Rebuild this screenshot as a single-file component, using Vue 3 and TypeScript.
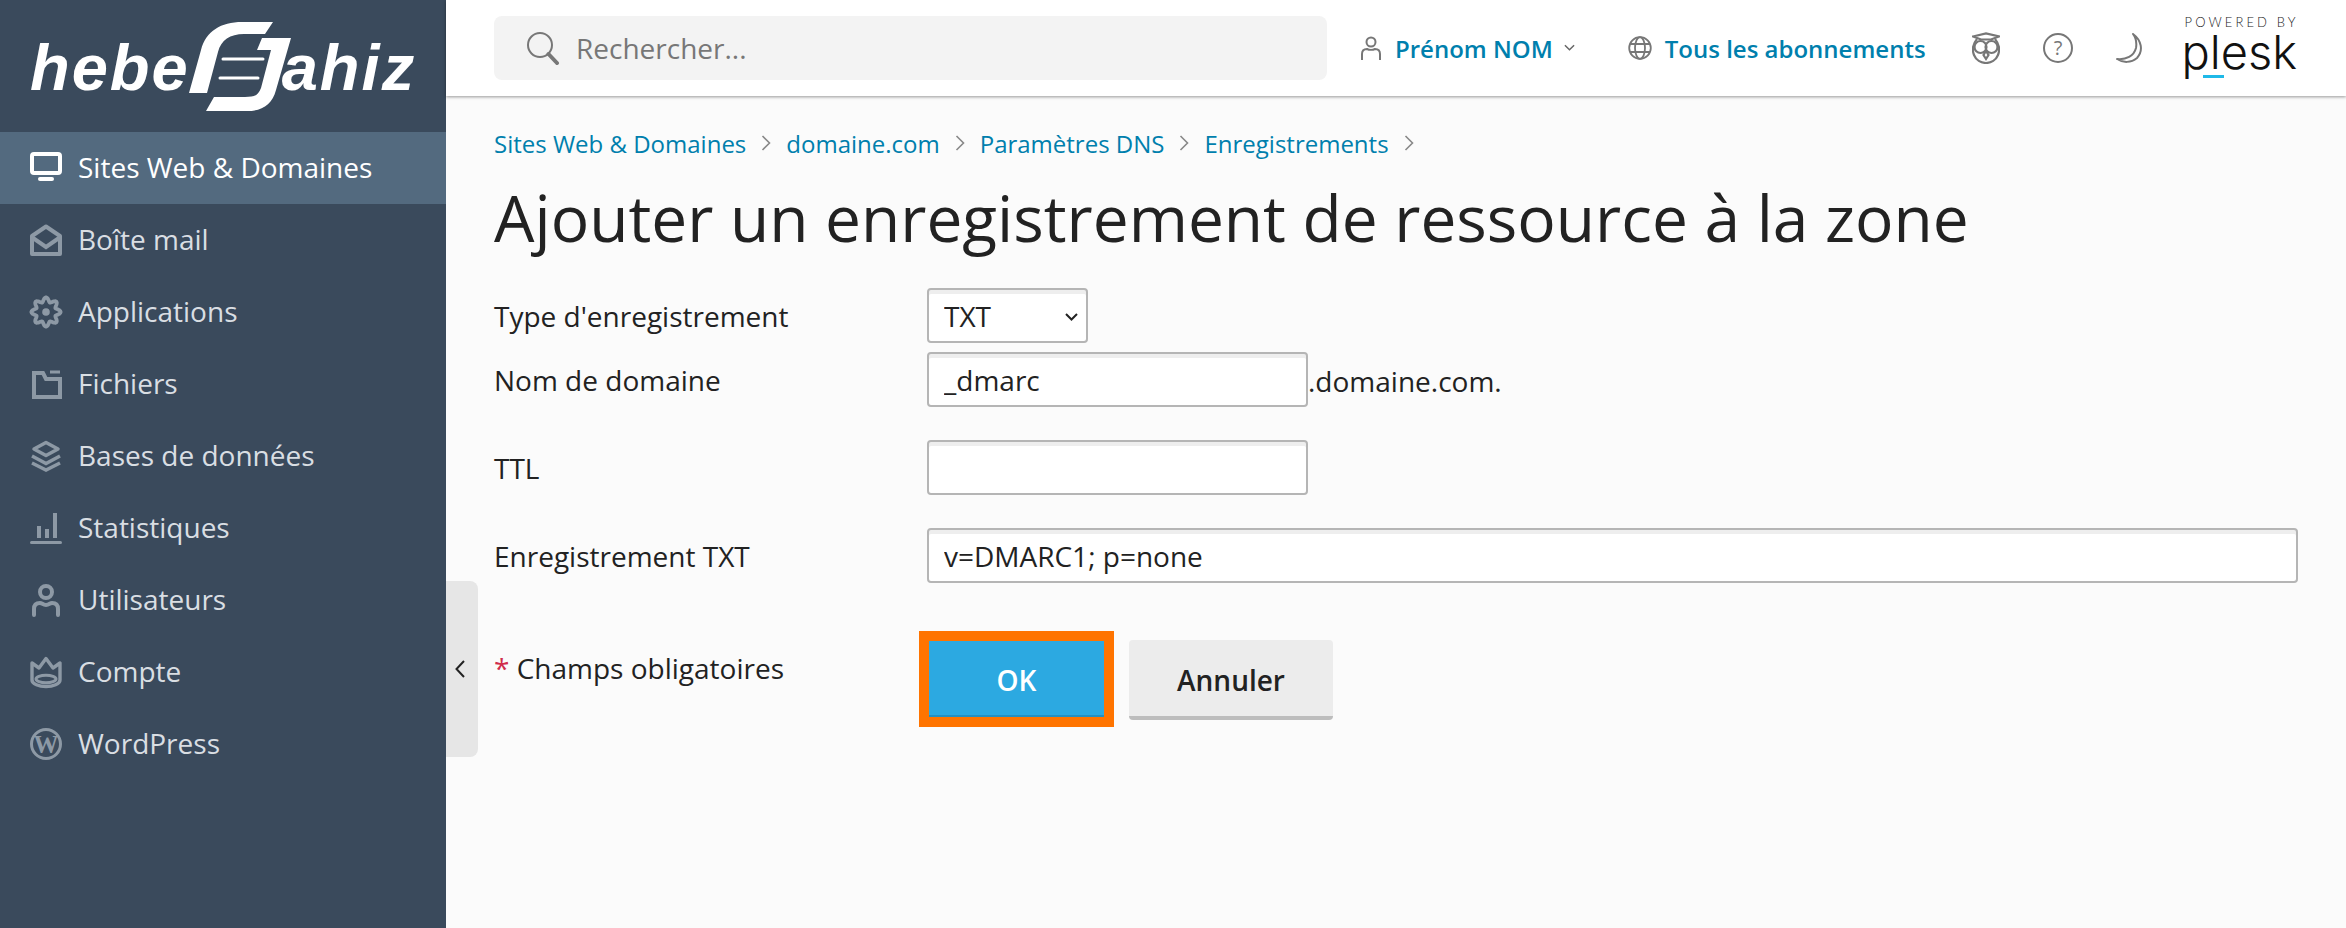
<script setup lang="ts">
const crumbs: string[] = ['Sites Web & Domaines', 'domaine.com', 'Paramètres DNS', 'Enregistrements']
const nav: { label: string; icon: string; active?: boolean }[] = [
  { label: 'Sites Web & Domaines', icon: 'monitor', active: true },
  { label: 'Boîte mail', icon: 'mail' },
  { label: 'Applications', icon: 'gear' },
  { label: 'Fichiers', icon: 'folder' },
  { label: 'Bases de données', icon: 'layers' },
  { label: 'Statistiques', icon: 'stats' },
  { label: 'Utilisateurs', icon: 'user' },
  { label: 'Compte', icon: 'crown' },
  { label: 'WordPress', icon: 'wp' },
]
const gearPath: string = Array.from({ length: 96 }, (_, i) => {
  const t = (i / 96) * Math.PI * 2
  const r = 12.4 + 2.2 * Math.cos(8 * t)
  return `${i === 0 ? 'M' : 'L'}${(16 + r * Math.sin(t)).toFixed(2)} ${(16 - r * Math.cos(t)).toFixed(2)}`
}).join(' ') + ' Z'
</script>

<template>
  <div class="app">
    <aside class="sidebar">
      <div class="logo">
        <span class="logo-text">hebe</span>
        <svg class="logo-mark" viewBox="0 0 104 94" width="104" height="94" fill="#fff">
          <path d="M2 73 L14 30 C19 11 34 2 55 2 L86 2 L78 14 L57 14 C43 14 34 20 31 32 L20 73 Z" />
          <path d="M104 18 L75 18 L70 30 L84 30 L74 68 C71 76 67 77 58 77 L27 77 L19 91 L60 91 C75 91 85 85 89 70 Z" />
          <path d="M36 39 L76 39 M33 58 L71 58" stroke="#fff" stroke-width="3" stroke-linecap="round" fill="none" />
        </svg>
        <span class="logo-text logo-right">ahiz</span>
      </div>
      <nav class="nav">
        <a v-for="item in nav" :key="item.label" class="nav-item" :class="{ active: item.active }">
          <svg class="nav-icon" viewBox="0 0 32 32" width="32" height="32">
            <template v-if="item.icon === 'monitor'">
              <rect x="2" y="2" width="28" height="19" rx="2" class="ln" stroke-width="4" />
              <rect x="8" y="25" width="16" height="4" rx="2" class="fl" />
            </template>
            <template v-else-if="item.icon === 'mail'">
              <path d="M2 12 L16 2.5 L30 12 V30 H2 Z" class="ln" stroke-width="4" stroke-linejoin="round" />
              <path d="M3 14 L16 23 L29 14" class="ln" stroke-width="4" />
            </template>
            <template v-else-if="item.icon === 'gear'">
              <path :d="gearPath" class="ln" stroke-width="3.8" stroke-linejoin="round" />
              <circle cx="16" cy="16" r="3.8" class="fl" />
            </template>
            <template v-else-if="item.icon === 'folder'">
              <path d="M4 5 H13 L16 11 H30 V29 H4 Z" class="ln" stroke-width="4" />
              <path d="M20 4 H30" class="ln" stroke-width="3" />
            </template>
            <template v-else-if="item.icon === 'layers'">
              <path d="M16 2.5 L28 9 L16 15.5 L4 9 Z" class="ln" stroke-width="3.5" stroke-linejoin="round" />
              <path d="M2 16 L16 23.5 L30 16 M2 23 L16 30 L30 23" class="ln" stroke-width="3.5" />
            </template>
            <template v-else-if="item.icon === 'stats'">
              <rect x="7" y="14" width="4" height="12" class="fl" />
              <rect x="15" y="17" width="4" height="9" class="fl" />
              <rect x="23" y="1" width="4" height="25" class="fl" />
              <rect x="0" y="29" width="32" height="3" rx="1.5" class="fl" />
            </template>
            <template v-else-if="item.icon === 'user'">
              <circle cx="16" cy="8" r="6" class="ln" stroke-width="4" />
              <path d="M4 31 V25 C4 21 6 19 10 19 C12 19 13 21 16 21 C19 21 20 19 22 19 C26 19 28 21 28 25 V31" class="ln" stroke-width="4" stroke-linecap="round" />
            </template>
            <template v-else-if="item.icon === 'crown'">
              <path d="M2 7 L9 12 L16 2.5 L23 12 L30 7 V24 C30 28 23 30.5 16 30.5 C9 30.5 2 28 2 24 Z" class="ln" stroke-width="3.4" stroke-linejoin="round" />
              <ellipse cx="16" cy="23" rx="10" ry="3.8" class="ln" stroke-width="3" />
            </template>
            <template v-else-if="item.icon === 'wp'">
              <circle cx="16" cy="16" r="14.5" class="ln" stroke-width="3" />
              <text x="16" y="25" text-anchor="middle" class="wp-w">W</text>
            </template>
          </svg>
          <span class="nav-label">{{ item.label }}</span>
        </a>
      </nav>
    </aside>

    <button class="collapse" type="button" aria-label="Réduire">
      <svg viewBox="0 0 10 20" width="10" height="20"><path d="M9 2 L1.5 10 L9 18" fill="none" stroke="#222" stroke-width="2" /></svg>
    </button>

    <div class="main">
      <header class="topbar">
        <div class="search">
          <svg viewBox="0 0 34 34" width="34" height="34" class="search-icon">
            <circle cx="14" cy="14" r="12" fill="none" stroke="#777" stroke-width="2" />
            <path d="M22.5 23 L31 32" fill="none" stroke="#777" stroke-width="4" stroke-linecap="round" />
          </svg>
          <span>Rechercher...</span>
        </div>
        <div class="user">
          <svg viewBox="0 0 22 24" width="22" height="24">
            <circle cx="11" cy="6" r="4.5" fill="none" stroke="#777" stroke-width="2" />
            <path d="M2 24 V18 C2 15 4 13 7 13 C9 14 13 14 15 13 C18 13 20 15 20 18 V24" fill="none" stroke="#777" stroke-width="2" />
          </svg>
          <span class="top-link">Prénom NOM</span>
          <svg viewBox="0 0 12 8" width="11" height="8" class="caret"><path d="M1 1 L6 6 L11 1" fill="none" stroke="#666" stroke-width="1.6" /></svg>
        </div>
        <div class="subs">
          <svg viewBox="0 0 24 24" width="24" height="24">
            <g fill="none" stroke="#777" stroke-width="1.8">
              <circle cx="12" cy="12" r="10.8" />
              <ellipse cx="12" cy="12" rx="5" ry="10.8" />
              <path d="M2 8 H22 M2 16 H22" />
            </g>
          </svg>
          <span class="top-link">Tous les abonnements</span>
        </div>
        <svg class="owl" viewBox="0 0 28 32" width="28" height="32">
          <g fill="none" stroke="#777" stroke-width="2.2">
            <path d="M1 4.5 L14 1.5 L27 4.5 L19 7.5 H9 Z" />
            <path d="M5 7 C1 12 0 18 2 23 C4 28 9 31 14 31 C19 31 24 28 26 23 C28 18 27 12 23 7" />
            <circle cx="8.5" cy="15" r="6" />
            <circle cx="19.5" cy="15" r="6" />
            <path d="M14 19 L11.5 23 L14 27 L16.5 23 Z" />
          </g>
        </svg>
        <svg class="help" viewBox="0 0 30 30" width="30" height="30">
          <circle cx="15" cy="15" r="14" fill="none" stroke="#777" stroke-width="2" />
          <text x="15" y="22" text-anchor="middle" class="q">?</text>
        </svg>
        <svg class="moon" viewBox="0 0 27 30" width="27" height="30">
          <path d="M17 1 C25 7 28 17 21 25 C15 30 7 30 1 26 C10 27 18 23 20 15 C21 9 20 5 17 1 Z" fill="none" stroke="#777" stroke-width="2" stroke-linejoin="round" />
        </svg>
        <div class="plesk">
          <span class="powered">POWERED BY</span>
          <span class="plesk-word">plesk</span>
          <i class="plesk-dash"></i>
        </div>
      </header>

      <main class="content">
        <div class="crumbs">
          <template v-for="c in crumbs" :key="c">
            <a class="crumb">{{ c }}</a>
            <svg viewBox="0 0 10 18" width="10" height="18" class="sep"><path d="M1.5 2 L8.5 9 L1.5 16" fill="none" stroke="#888" stroke-width="1.6" /></svg>
          </template>
        </div>
        <h1 class="title">Ajouter un enregistrement de ressource à la zone</h1>

        <form class="form" @submit.prevent>
          <div class="row row-select">
            <label class="label">Type d'enregistrement</label>
            <div class="select-wrap">
              <select class="select"><option>TXT</option></select>
              <svg class="select-caret" viewBox="0 0 13 8" width="13" height="8"><path d="M1 1 L6.5 6.5 L12 1" fill="none" stroke="#222" stroke-width="2" /></svg>
            </div>
          </div>
          <div class="row">
            <label class="label">Nom de domaine</label>
            <input class="input short" value="_dmarc" />
            <span class="suffix">.domaine.com.</span>
          </div>
          <div class="row">
            <label class="label">TTL</label>
            <input class="input short" value="" />
          </div>
          <div class="row row-last">
            <label class="label">Enregistrement TXT</label>
            <input class="input wide" value="v=DMARC1; p=none" />
          </div>
          <div class="actions">
            <div class="req"><span class="star">*</span> Champs obligatoires</div>
            <div class="btn-wrap">
              <button class="btn btn-ok" type="submit">OK</button>
            </div>
            <button class="btn btn-cancel" type="button">Annuler</button>
          </div>
        </form>
      </main>
    </div>
  </div>
</template>

<style>
html, body { margin: 0; padding: 0; background: #fbfbfb; }
</style>

<style scoped>
.app {
  display: flex;
  height: 928px;
  width: 2346px;
  overflow: hidden;
  position: relative;
  font-family: "Open Sans", sans-serif;
  color: #222;
  background: #fbfbfb;
}
.sidebar {
  width: 446px;
  flex: none;
  background: #3a4a5c;
  color: #d9dee3;
}
.logo {
  height: 132px;
  box-sizing: border-box;
  padding-left: 30px;
  display: flex;
  position: relative;
}
.logo-text {
  font-family: "Liberation Sans", sans-serif;
  font-weight: 700;
  font-style: italic;
  font-size: 65px;
  letter-spacing: 2px;
  color: #fff;
  line-height: 65px;
  margin-top: 35px;
  height: 65px;
}
.logo-mark {
  margin: 20px 0 0 -3px;
  flex: none;
}
.logo-right { margin-left: -9px; letter-spacing: 2px; }
.nav { display: flex; flex-direction: column; }
.nav-item {
  height: 72px;
  display: flex;
  align-items: center;
  gap: 16px;
  padding-left: 30px;
  font-size: 28px;
  --ic: #8d99a5;
}
.nav-label { margin-top: -2px; }
.nav-item.active { background: #536a7f; color: #fff; --ic: #fff; }
.nav-icon { flex: none; overflow: visible; }
.ln { fill: none; stroke: var(--ic); }
.fl { fill: var(--ic); }
.wp-w { font-family: "Liberation Serif", serif; font-size: 25px; font-weight: 700; fill: var(--ic); }
.collapse {
  position: absolute;
  left: 446px;
  top: 581px;
  width: 32px;
  height: 176px;
  background: #e6e6e6;
  border: 0;
  padding: 0 0 0 9px;
  border-radius: 0 8px 8px 0;
  display: flex;
  align-items: center;
  justify-content: flex-start;
}
.main { flex: 1; display: flex; flex-direction: column; min-width: 0; }
.topbar {
  height: 96px;
  flex: none;
  box-sizing: border-box;
  background: #fff;
  box-shadow: 0 1px 3px rgba(0, 0, 0, 0.4);
  display: flex;
  align-items: center;
  padding-left: 48px;
  position: relative;
}
.search {
  width: 833px;
  height: 64px;
  box-sizing: border-box;
  background: #f3f3f3;
  border-radius: 8px;
  display: flex;
  align-items: center;
  padding-left: 32px;
  gap: 16px;
  font-size: 28px;
  color: #777;
  flex: none;
}
.search-icon { flex: none; }
.user { margin-left: 33px; display: flex; align-items: center; gap: 13px; flex: none; }
.caret { margin-left: -2px; }
.top-link { color: #007fad; font-size: 24px; font-weight: 600; white-space: nowrap; }
.subs { margin-left: 53px; display: flex; align-items: center; gap: 13px; flex: none; }
.owl { margin-left: 46px; flex: none; }
.help { margin-left: 43px; flex: none; }
.moon { margin-left: 43px; flex: none; }
.plesk {
  margin-left: 42px;
  width: 116px;
  height: 64px;
  position: relative;
  flex: none;
  align-self: flex-start;
  margin-top: 15px;
}
.powered {
  display: block;
  font-family: "Lato", sans-serif;
  font-weight: 300;
  font-size: 13px;
  letter-spacing: 3.1px;
  line-height: 14px;
  white-space: nowrap;
  color: #222;
}
.plesk-word {
  display: block;
  font-family: "Inter", sans-serif;
  font-weight: 300;
  font-size: 47px;
  line-height: 46px;
  margin: 0 0 0 -3px;
  color: #111;
}
.plesk-dash {
  position: absolute;
  left: 18px;
  top: 60px;
  width: 21px;
  height: 3px;
  background: #1fb9e8;
}
.content { padding: 0 48px 0 48px; flex: 1; }
.crumbs {
  margin-top: 31px;
  height: 32px;
  display: flex;
  align-items: center;
  gap: 15px;
}
.crumb { color: #007fad; font-size: 24px; white-space: nowrap; }
.sep { flex: none; }
.title {
  margin: 19px 0 0;
  font-weight: 400;
  font-size: 64px;
  line-height: 80px;
  color: #222;
  white-space: nowrap;
}
.form { margin-top: 30px; }
.row {
  display: flex;
  align-items: center;
  height: 55px;
  margin-bottom: 33px;
  font-size: 28px;
}
.row-select { margin-bottom: 9px; }
.row-last { margin-bottom: 48px; }
.label { width: 433px; flex: none; font-size: 28px; }
.select-wrap { position: relative; width: 161px; height: 55px; flex: none; }
.select {
  width: 161px;
  height: 55px;
  box-sizing: border-box;
  appearance: none;
  background: #fff;
  border: 2px solid #b5b5b5;
  border-radius: 4px;
  padding: 0 15px;
  font-family: inherit;
  font-size: 28px;
  color: #222;
  box-shadow: inset 0 4px 0 #eee;
}
.select-caret { position: absolute; left: 138px; top: 25px; }
.input {
  height: 55px;
  box-sizing: border-box;
  background: #fff;
  border: 2px solid #b5b5b5;
  border-radius: 4px;
  padding: 0 15px;
  font-family: inherit;
  font-size: 28px;
  color: #222;
  box-shadow: inset 0 4px 0 #eee;
  outline: none;
  flex: none;
}
.short { width: 381px; }
.wide { width: 1371px; }
.suffix { font-size: 28px; margin-top: 2px; }
.actions { display: flex; align-items: flex-start; }
.req { width: 425px; flex: none; font-size: 28px; margin-top: 18px; line-height: 38px; }
.star { color: #d02d4b; }
.btn-wrap { border: 10px solid #ff7400; width: 175px; height: 76px; flex: none; }
.btn {
  font-family: inherit;
  font-size: 28px;
  font-weight: 600;
  border: 0;
  padding: 0;
}
.btn-ok {
  width: 175px;
  height: 76px;
  display: block;
  background: #2ca9e1;
  border-bottom: 2px solid #2490c2;
  color: #fff;
  padding-top: 4px;
}
.btn-cancel {
  width: 204px;
  height: 80px;
  margin: 9px 0 0 15px;
  background: #ececec;
  border-bottom: 4px solid #bdbdbd;
  border-radius: 4px;
  color: #222;
  padding-top: 4px;
}
.q { font-family: "Open Sans", sans-serif; font-size: 20px; fill: #777; }
</style>
